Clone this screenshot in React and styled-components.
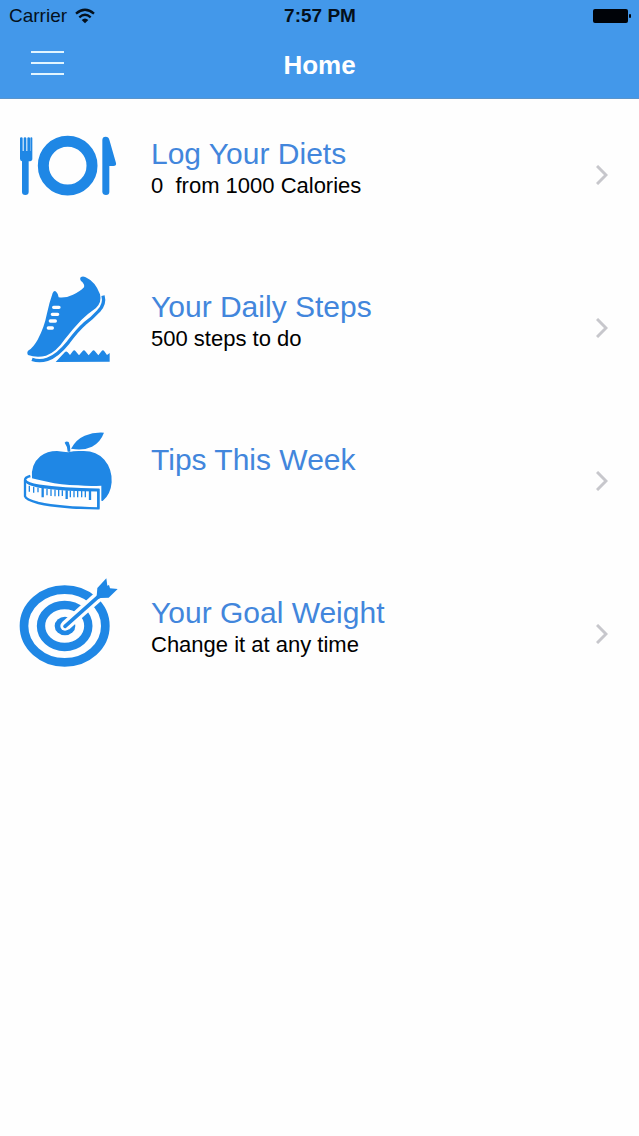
import React from 'react'
import styled, { createGlobalStyle } from 'styled-components'


const GlobalStyle = createGlobalStyle`
  * {
    box-sizing: border-box;
  }
  body {
    margin: 0;
    background: #fefefe;
    font-family: "Liberation Sans", Arial, sans-serif;
  }
`

const PlateIcon = () => (
  <Picture viewBox="48 -9 312 312" aria-hidden="true">
    <path d="M60 55q0-3 4-3t4 3v38h3V55q0-3 4-3t4 3v38h3V55q0-3 4-3t4 3v38h1V55q0-3 3-3t3 3v62q0 7-11 7v92q0 9-10 9t-10-9v-92q-6-1-6-8z" />
    <circle cx="203" cy="137" r="73" fill="none" stroke="#1f87e5" strokeWidth="33" />
    <path d="M307 60q0-10 10-10 9 0 11 9l20 70q2 9-8 9h-12v78q0 9-10 9t-11-9z" />
  </Picture>
)

const ShoeIcon = () => (
  <Picture viewBox="18 15 312 312" aria-hidden="true">
    <path d="M213 36q6-4 14 1Q256 50 270 88 276 112 258 129 236 144 214 165 190 190 165 222 138 262 108 272 80 279 54 270 49 262 56 256 70 247 83 224 103 186 110 149 118 112 128 84 133 74 139 81 146 88 146 97 167 100 189 89 211 79 219 70 225 65 221 57 217 50 213 48 208 40 213 36z" />
    <path d="M66 283Q88 291 112 283 142 273 175 232 202 195 224 176 246 160 266 138 286 117 279 92" fill="none" stroke="#1f87e5" strokeWidth="10" />
    <path d="M137 291l28-30q4-4 8 1l7 8 9-12q4-5 8 1l10 12 11-13q4-5 8 1l10 12 11-13q4-5 8 1l10 12 10-13q4-5 8 1l8 11 8-6v26z" />
    <path d="M131 127h16M127 148h16M121 168h15M115 189h12" fill="none" stroke="#fefefe" strokeWidth="10" strokeLinecap="round" />
  </Picture>
)

const AppleIcon = () => (
  <Picture viewBox="18 9 312 312" aria-hidden="true">
    <path d="M66 175q-4-42 25-66 20-16 50-16 20 2 34 4 18-5 38-4 45-3 70 26 24 28 22 68-3 37-27 56l-4-1v-45q-38 2-70-1-52-1-92-11-38-7-46-10z" />
    <path d="M164 68q5-6 12-2 6 11 5 29h-8q-1-17-9-27z" />
    <path d="M183 86q15-28 41-39 27-11 58-9-11 29-36 42-27 13-63 6z" />
    <path d="M61 168q-17 4-18 12v49q2 11 42 22 61 15 180 16v-62q-130-2-187-12-28-5-29-10 0-5 13-8z" fill="#fefefe" />
    <path d="M61 168q-16 4-16 12 5 11 42 17 70 10 178 12v56q-112-1-180-16-38-10-40-20v-49" fill="none" stroke="#1f87e5" strokeWidth="7" />
    <path d="M47 182q5 14 57 21 62 9 162 9" fill="none" stroke="#1f87e5" strokeWidth="5" />
    <path d="M58 197v18M71 200v18M84 203v14M111 207v19M123 208v20M135 209v20M146 210v19M157 211v17M181 212v20M192 212v20M203 213v19M215 213v19M226 213v19" fill="none" stroke="#1f87e5" strokeWidth="4" />
    <path d="M98 204v28M170 211v26M240 212v28M265 207v59" fill="none" stroke="#1f87e5" strokeWidth="7" />
  </Picture>
)

const TargetIcon = () => (
  <Picture viewBox="18 18 312 312" aria-hidden="true">
    <g fill="none" stroke="#1f87e5">
      <ellipse cx="164" cy="168" rx="122" ry="109" strokeWidth="26" />
      <ellipse cx="164" cy="168" rx="71" ry="63" strokeWidth="25" />
    </g>
    <ellipse cx="165" cy="168" rx="31" ry="28" />
    <path d="M166 168L278 68" fill="none" stroke="#fefefe" strokeWidth="31" />
    <circle cx="165" cy="168" r="14" fill="#fefefe" />
    <path d="M165 169L276 70" fill="none" stroke="#1f87e5" strokeWidth="11" strokeLinecap="round" />
    <path d="M260 79l2-25 27-29 3 22 5-2 3 10 23 2-27 26-24 1-7 3z" />
  </Picture>
)

const rows = [
  { title: 'Log Your Diets', detail: '0  from 1000 Calories', Icon: PlateIcon },
  { title: 'Your Daily Steps', detail: '500 steps to do', Icon: ShoeIcon },
  { title: 'Tips This Week', Icon: AppleIcon },
  { title: 'Your Goal Weight', detail: 'Change it at any time', Icon: TargetIcon },
]

export default function App() {
  return (
    <>
      <GlobalStyle />
      <Header>
        <StatusBar>
          <Carrier>
            Carrier
            <svg width="20" height="16" viewBox="0 0 60 48" aria-hidden="true">
              <g fill="none" stroke="#04101c" strokeWidth="7">
                <path d="M3 17Q30-6 57 17" />
                <path d="M13 28q17-15 34 0" />
              </g>
              <path d="M20 36q10-9 20 0L30 46z" fill="#04101c" />
            </svg>
          </Carrier>
          <Time>7:57 PM</Time>
          <Battery viewBox="0 0 38 16" aria-hidden="true">
            <rect x="0" y="1" width="35" height="14" rx="2" />
            <rect x="36" y="6" width="2" height="4" rx="1" />
          </Battery>
        </StatusBar>
        <NavBar>
          <MenuButton aria-label="Menu">
            <svg width="33" height="24" viewBox="0 0 33 24" aria-hidden="true">
              <path d="M0 1h33M0 12h33M0 23h33" stroke="#e2f5ff" strokeWidth="2" />
            </svg>
          </MenuButton>
          <PageTitle>Home</PageTitle>
        </NavBar>
      </Header>

      <main>
        <List>
          {rows.map(({ title, detail, Icon }) => (
            <li key={title}>
              <RowLink href="#">
                <Icon />
                <RowText>
                  <RowTitle>{title}</RowTitle>
                  {detail && <RowDetail>{detail}</RowDetail>}
                </RowText>
                <Chevron viewBox="0 0 12 20" aria-hidden="true">
                  <path d="M1 1l9 9-9 9" />
                </Chevron>
              </RowLink>
            </li>
          ))}
        </List>
      </main>
    </>
  )
}

const Header = styled.header`
  background: #4398ea;
  border-bottom: 1px solid #5a94cb;
`

const StatusBar = styled.div`
  display: grid;
  grid-template-columns: 1fr auto 1fr;
  align-items: center;
  padding: 0 8px 0 9px;
  font-size: 19px;
  line-height: 32px;
  color: #04101c;
`

const Carrier = styled.span`
  display: flex;
  align-items: center;
  gap: 8px;
`

const Time = styled.span`
  font-weight: bold;
`

const Battery = styled.svg`
  width: 38px;
  height: 16px;
  justify-self: end;
  fill: #000308;
`

const NavBar = styled.div`
  display: grid;
  grid-template-columns: 1fr auto 1fr;
  align-items: center;
  height: 66px;
  padding: 0 31px;
`

const MenuButton = styled.button`
  display: flex;
  justify-self: start;
  padding: 0 0 4px;
  border: 0;
  background: none;
  cursor: pointer;
`

const PageTitle = styled.h1`
  margin: 0;
  font-size: 26px;
  line-height: 30px;
  color: #fff;
`

const List = styled.ul`
  margin: 0;
  padding: 0;
  list-style: none;
`

const RowLink = styled.a`
  display: flex;
  align-items: center;
  min-height: 153px;
  padding: 18px 31px 31px 16px;
  text-decoration: none;
`

const Picture = styled.svg`
  flex: none;
  width: 104px;
  height: 104px;
  fill: #1f87e5;
`

const RowText = styled.div`
  flex: 1;
  align-self: flex-start;
  padding-top: 21px;
  margin-left: 31px;
`

/* the title box cuts off the tails of the letters */
const RowTitle = styled.h2`
  margin: 0;
  overflow: hidden;
  font-size: 30px;
  font-weight: normal;
  line-height: 32px;
  color: #4286dc;
`

const RowDetail = styled.p`
  margin: 0;
  font-size: 22px;
  line-height: 32px;
  white-space: pre-wrap;
  color: #000;
`

const Chevron = styled.svg`
  flex: none;
  width: 12px;
  height: 20px;
  margin-top: 12px;
  fill: none;
  stroke: #c7c7cc;
  stroke-width: 3px;
`
